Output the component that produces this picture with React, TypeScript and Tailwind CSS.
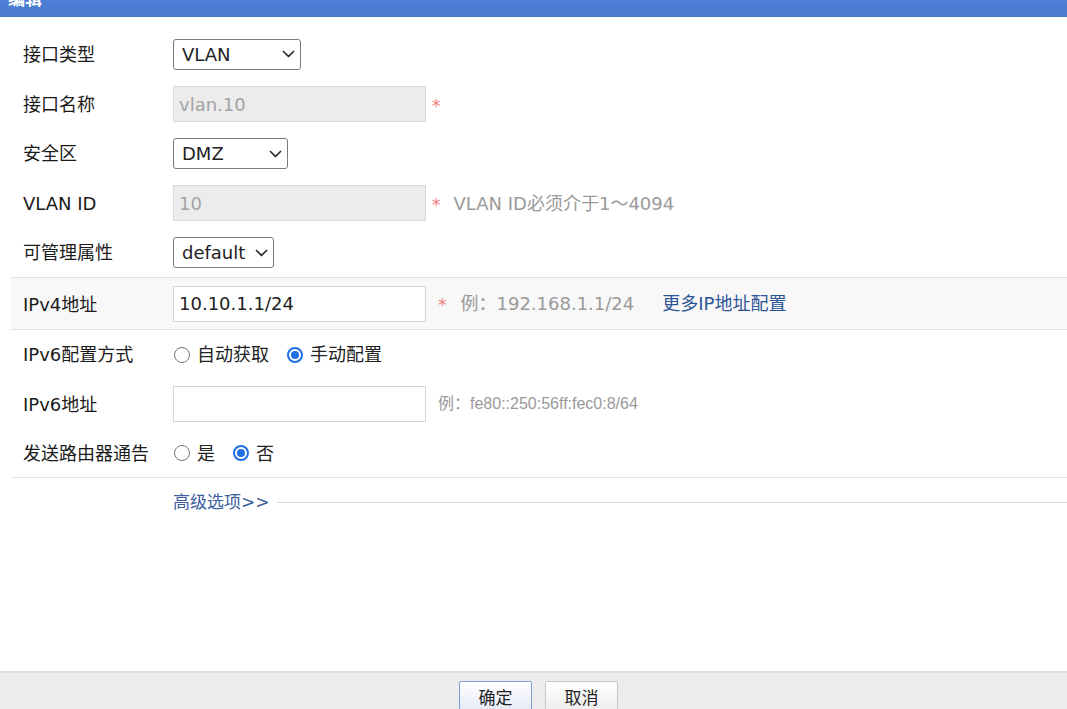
import React from "react";

function Chevron() {
  return (
    <svg width="13" height="8" viewBox="0 0 13 8" className="shrink-0">
      <path d="M1.5 1.5l5 5 5-5" stroke="#2a2a2a" strokeWidth="1.7" fill="none" strokeLinecap="round" strokeLinejoin="round" />
    </svg>
  );
}

function Select({ value, w }: { value: string; w: string }) {
  return (
    <div className={`flex items-center justify-between h-[31px] border border-[#7a7a7a] rounded-[3px] pl-[8px] pr-[5px] bg-white text-[#222] ${w}`}>
      <span>{value}</span>
      <Chevron />
    </div>
  );
}

function Radio({ checked, label }: { checked?: boolean; label: string }) {
  return (
    <div className="flex items-center mr-[17px]">
      {checked ? (
        <span className="ml-[1px] w-[16px] h-[16px] rounded-full border-[2px] border-[#1f6fe8] bg-white flex items-center justify-center">
          <span className="w-[8px] h-[8px] rounded-full bg-[#1f6fe8]" />
        </span>
      ) : (
        <span className="ml-[1px] w-[16px] h-[16px] rounded-full border border-[#777] bg-white" />
      )}
      <span className="ml-[7px] text-[#222]">{label}</span>
    </div>
  );
}

function Star({ ml }: { ml: string }) {
  return <span className={`${ml} text-[#ef7e7e] text-[17px] leading-none translate-y-[2px]`}>*</span>;
}

export default function App() {
  return (
    <div className="w-[1067px] h-[709px] flex flex-col bg-white overflow-hidden font-['DejaVu_Sans','Noto_Sans_CJK_SC',sans-serif] text-[18px]">
      <div className="h-[17px] shrink-0 bg-gradient-to-b from-[#4c80d6] to-[#477acd] flex justify-between overflow-hidden">
        <span className="ml-[8px] -mt-[11px] text-white font-bold text-[17px] leading-[17px] font-['Noto_Sans_CJK_SC',sans-serif]">编辑</span>
        <span className="mr-[1px] -mt-[14px] text-white text-[16px] leading-[17px]">×</span>
      </div>

      <div className="flex-1 pt-[12px] pl-[11px]">
        <div className="flex items-center h-[50px] pl-[12px]">
          <div className="w-[150px] shrink-0 text-[#1a1a1a]">接口类型</div>
          <Select value="VLAN" w="w-[128px]" />
        </div>
        <div className="flex items-center h-[50px] pl-[12px]">
          <div className="w-[150px] shrink-0 text-[#1a1a1a]">接口名称</div>
          <div className="w-[253px] h-[36px] border border-[#d8d8d8] bg-[#ececec] flex items-center pl-[5px] text-[#a3a3a3]">vlan.10</div>
          <Star ml="ml-[6px]" />
        </div>
        <div className="flex items-center h-[49px] pl-[12px]">
          <div className="w-[150px] shrink-0 text-[#1a1a1a]">安全区</div>
          <Select value="DMZ" w="w-[115px]" />
        </div>
        <div className="flex items-center h-[50px] pl-[12px]">
          <div className="w-[150px] shrink-0 text-[#1a1a1a]">VLAN ID</div>
          <div className="w-[253px] h-[36px] border border-[#d8d8d8] bg-[#ececec] flex items-center pl-[5px] text-[#a3a3a3]">10</div>
          <Star ml="ml-[6px]" />
          <span className="ml-[13px] text-[#9a9a9a]">VLAN ID必须介于1～4094</span>
        </div>
        <div className="flex items-center h-[49px] pl-[12px]">
          <div className="w-[150px] shrink-0 text-[#1a1a1a]">可管理属性</div>
          <Select value="default" w="w-[101px]" />
        </div>
        <div className="flex items-center h-[53px] pl-[12px] bg-[#f8f8f8] border-y border-[#e2e2e2]">
          <div className="w-[150px] shrink-0 text-[#1a1a1a] translate-y-[1px]">IPv4地址</div>
          <div className="w-[253px] h-[36px] border border-[#d4d4d4] bg-white flex items-center pl-[5px] text-[#222]">10.10.1.1/24</div>
          <Star ml="ml-[12px]" />
          <span className="ml-[14px] text-[#9a9a9a]">例：192.168.1.1/24</span>
          <span className="ml-[28px] text-[#2d5596]">更多IP地址配置</span>
        </div>
        <div className="flex items-center h-[49px] pl-[12px]">
          <div className="w-[150px] shrink-0 text-[#1a1a1a]">IPv6配置方式</div>
          <Radio label="自动获取" />
          <Radio checked label="手动配置" />
        </div>
        <div className="flex items-center h-[50px] pl-[12px]">
          <div className="w-[150px] shrink-0 text-[#1a1a1a]">IPv6地址</div>
          <div className="w-[253px] h-[36px] border border-[#d4d4d4] bg-white" />
          <span className="ml-[12px] text-[#9a9a9a] text-[16px] font-['Liberation_Sans','Noto_Sans_CJK_SC',sans-serif]">例：fe80::250:56ff:fec0:8/64</span>
        </div>
        <div className="flex items-center h-[49px] pl-[12px] border-b border-[#e2e2e2]">
          <div className="w-[150px] shrink-0 text-[#1a1a1a]">发送路由器通告</div>
          <Radio label="是" />
          <Radio checked label="否" />
        </div>
        <div className="flex items-center h-[46px] pl-[162px]">
          <span className="text-[17px] text-[#3b5f9e] translate-y-[2px]">高级选项&gt;&gt;</span>
          <div className="flex-1 ml-[7px] h-px bg-[#d8d8d8] translate-y-[1px]" />
        </div>
      </div>

      <div className="h-[38px] shrink-0 border-t-2 border-[#dcdcdc] bg-[#ececec] flex justify-center gap-[13px] pt-[8px] pl-[10px] overflow-hidden">
        <div className="w-[73px] h-[32px] border border-[#7b9fd6] rounded-[2px] bg-gradient-to-b from-[#ffffff] to-[#e3e9f6] flex items-center justify-center text-[17px] text-[#222] font-['Noto_Sans_CJK_SC',sans-serif]">确定</div>
        <div className="w-[73px] h-[32px] border border-[#c6c6c6] rounded-[2px] bg-gradient-to-b from-[#ffffff] to-[#ececec] flex items-center justify-center text-[17px] text-[#222] font-['Noto_Sans_CJK_SC',sans-serif]">取消</div>
      </div>
    </div>
  );
}
